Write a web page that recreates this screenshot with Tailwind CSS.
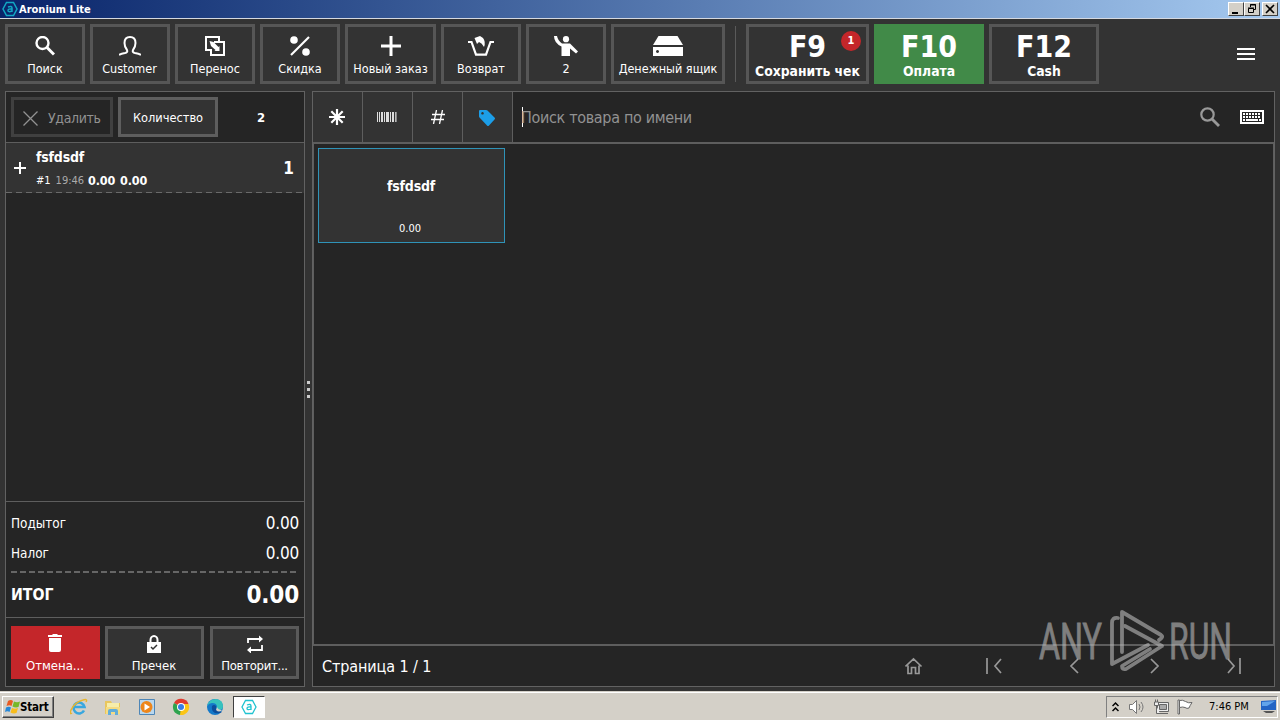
<!DOCTYPE html>
<html lang="ru">

<head>
  <meta charset="UTF-8">
  <meta name="viewport" content="width=device-width, initial-scale=1.0">
  <title>Aronium Lite</title>
  <script src="https://cdn.jsdelivr.net/npm/@tailwindcss/browser@4"></script>
</head>

<body class="relative flex h-[720px] w-[1280px] flex-col overflow-hidden bg-[#333] font-['DejaVu_Sans_Condensed','Noto_Sans',sans-serif] text-white">
  <!-- Title bar -->
  <header class="flex h-[19px] shrink-0 items-center border-b border-[#d4d8e0] bg-linear-to-r from-[#0a246a] to-[#a6caf0] pr-[2px] pl-[2px]">
    <svg class="h-4 w-4" viewBox="0 0 16 16" fill="none" stroke="#12a8c4" stroke-width="1.5">
      <path d="M4.5 1.5h7L15 8l-3.500 6.500h-7L1 8z" />
      <path d="M6 6q4-1.500 4 1v4M10 8q-4-.500-4 1.500T10 10" />
    </svg>
    <h1 class="ml-px text-[11px] leading-none font-bold">Aronium Lite</h1>
    <div class="ml-auto flex text-black">
      <span class="h-[14px] w-4 border border-t-white border-r-[#404040] border-b-[#404040] border-l-white bg-[#d4d0c8]">
        <svg class="h-3 w-[14px]" viewBox="0 0 14 12"><path d="M3 9h6v2H3z" /></svg>
      </span>
      <span class="h-[14px] w-4 border border-t-white border-r-[#404040] border-b-[#404040] border-l-white bg-[#d4d0c8]">
        <svg class="h-3 w-[14px]" viewBox="0 0 14 12" fill="none" stroke="#000"><path d="M5.500 4V1.500h5v5H8M5 2h6M3.500 5.500h5v4h-5zM3 5h6" /></svg>
      </span>
      <span class="ml-[2px] h-[14px] w-4 border border-t-white border-r-[#404040] border-b-[#404040] border-l-white bg-[#d4d0c8]">
        <svg class="h-3 w-[14px]" viewBox="0 0 14 12" fill="none" stroke="#000" stroke-width="1.600"><path d="M3 2l8 8M11 2l-8 8" /></svg>
      </span>
    </div>
  </header>

  <!-- Toolbar -->
  <nav class="flex h-[72px] shrink-0 items-start gap-[5px] pt-[5px] pl-[5px] text-[12.5px]">
    <button class="flex h-[60px] w-20 flex-col items-center border-3 border-[#565656] pt-[9px]">
      <svg class="h-5 w-5" viewBox="0 0 20 20" fill="none" stroke="#fff"><circle cx="7.500" cy="7" r="6" stroke-width="2.400" /><path d="M12 11.500l7 7" stroke-width="3" /></svg>
      <span class="mt-[5px] leading-4 whitespace-nowrap">Поиск</span>
    </button>
    <button class="flex h-[60px] w-20 flex-col items-center border-3 border-[#565656] pt-[9px] pr-px">
      <svg class="h-5 w-[22px]" viewBox="0 0 22 20" fill="none" stroke="#fff" stroke-width="2"><path d="M0 19Q2 17.500 6 17q3-.5 2-3Q5.500 11 5.500 7 5.500 1 11 1t5.500 6q0 4-2.500 7-1 2.500 2 3 4 .5 6 2" /></svg>
      <span class="mt-[5px] leading-4 whitespace-nowrap">Customer</span>
    </button>
    <button class="flex h-[60px] w-20 flex-col items-center border-3 border-[#565656] pt-[9px]">
      <svg class="h-5 w-5" viewBox="0 0 20 20" fill="none" stroke="#fff" stroke-width="2"><path d="M5 14H1V1h13v4M9 6h10v13H6v-6M13 6h6" /><path d="M4.500 5l4 1 5 5 1-1v5H9.500l1-1-4.500-4z" fill="#fff" stroke="none" /></svg>
      <span class="mt-[5px] leading-4 whitespace-nowrap">Перенос</span>
    </button>
    <button class="flex h-[60px] w-20 flex-col items-center border-3 border-[#565656] pt-[9px]">
      <svg class="h-5 w-5" viewBox="0 0 20 20" fill="#fff"><circle cx="4" cy="4" r="3.800" /><circle cx="16" cy="16" r="3.800" /><path d="M1 19L19 1" stroke="#fff" stroke-width="2.200" /></svg>
      <span class="mt-[5px] leading-4 whitespace-nowrap">Скидка</span>
    </button>
    <button class="flex h-[60px] w-[91px] flex-col items-center border-3 border-[#565656] pt-[9px]">
      <svg class="h-5 w-5" viewBox="0 0 20 20" stroke="#fff" stroke-width="3"><path d="M10 0v20M0 10h20" /></svg>
      <span class="mt-[5px] leading-4 whitespace-nowrap">Новый заказ</span>
    </button>
    <button class="flex h-[60px] w-20 flex-col items-center border-3 border-[#565656] pt-[9px]">
      <svg class="h-5 w-7" viewBox="0 0 28 20" fill="none" stroke="#fff" stroke-width="2.200"><path d="M1 6h3.500L9 18.700h10L23.500 6H27" /><path d="M7.500 2L13 0l3 2q3 4 1 9-2-4-5-5l-2 2z" fill="#fff" stroke="none" /></svg>
      <span class="mt-[5px] leading-4 whitespace-nowrap">Возврат</span>
    </button>
    <button class="flex h-[60px] w-20 flex-col items-center border-3 border-[#565656] pt-[9px]">
      <svg class="h-5 w-6" viewBox="0 0 24 20" fill="#fff"><circle cx="12" cy="3.200" r="3.100" /><path d="M0 0h3q1 5 5 7.500h8l8 8-2 2-6-5V20H7.500v-9.500Q0 7 0 0z" /></svg>
      <span class="mt-[5px] leading-4 whitespace-nowrap">2</span>
    </button>
    <button class="flex h-[60px] w-[114px] flex-col items-center border-3 border-[#565656] pt-[9px]">
      <svg class="h-5 w-[30px]" viewBox="0 0 30 20" fill="#fff"><path d="M5.500 0h19L30 9H0z" /><path fill-rule="evenodd" d="M0 11h30v9H0zM4.500 14a1.500 1.500 0 1 0 .01 0z" /></svg>
      <span class="mt-[5px] leading-4 whitespace-nowrap">Денежный ящик</span>
    </button>
    <span class="mt-[2px] mr-[5px] ml-[5px] h-[56px] w-px bg-[#5a5a5a]"></span>
    <button class="relative flex h-[60px] w-[123px] flex-col items-center border-3 border-[#565656] pt-[3px] font-bold">
      <span class="text-[30px] leading-[34px]">F9</span>
      <span class="-mt-px text-[13.8px] leading-4 whitespace-nowrap">Сохранить чек</span>
      <span class="absolute top-1 right-[5px] flex h-5 w-5 items-center justify-center rounded-full bg-[#c4262a] text-[11px]">1</span>
    </button>
    <button class="flex h-[60px] w-[110px] flex-col items-center bg-[#418a48] pt-[6px] font-bold">
      <span class="text-[30px] leading-[34px]">F10</span>
      <span class="-mt-px text-[13.8px] leading-4">Оплата</span>
    </button>
    <button class="flex h-[60px] w-[110px] flex-col items-center border-3 border-[#565656] pt-[3px] font-bold">
      <span class="text-[30px] leading-[34px]">F12</span>
      <span class="-mt-px text-[13.8px] leading-4">Cash</span>
    </button>
    <svg class="mt-6 mr-[25px] ml-auto h-3 w-[18px]" viewBox="0 0 18 12" fill="#fff"><path d="M0 0h18v2H0zM0 5h18v2H0zM0 10h18v2H0z" /></svg>
  </nav>

  <!-- Workspace -->
  <main class="flex h-[600px] shrink-0 pl-[5px]">
    <!-- Order -->
    <section class="flex h-[596px] w-[300px] flex-col border border-[#626262] bg-[#252525]">
      <div class="flex h-[50px] shrink-0 items-center gap-[5px] px-[5px]">
        <button class="flex h-10 w-[102px] items-center border-3 border-[#404040] pt-[2px] pl-[9px] text-[14px] tracking-[-0.35px] text-[#929292]">
          <svg class="mr-[10px] h-[15px] w-[15px]" viewBox="0 0 15 15" stroke="#929292" stroke-width="1.300"><path d="M.5.5l14 14M14.500.5l-14 14" /></svg>
          Удалить
        </button>
        <button class="h-10 w-[100px] border-3 border-[#5e5e5e] bg-[#333] pt-px text-[12.700px] whitespace-nowrap">Количество</button>
        <span class="ml-[33px] w-[10px] pt-px text-center text-[13px] font-bold">2</span>
      </div>
      <div class="flex h-[51px] shrink-0 items-center border-t border-[#5e5e5e] bg-[#333]">
        <svg class="ml-2 h-3 w-3" viewBox="0 0 12 12" stroke="#fff" stroke-width="2"><path d="M6 0v12M0 6h12" /></svg>
        <div class="ml-[10px] flex flex-col">
          <span class="text-[14px] leading-[18px] font-bold tracking-[-0.2px]">fsfdsdf</span>
          <div class="mt-[7px] flex items-center gap-[5px] text-[11px] leading-4">
            <span>#1</span><span class="text-[#aaa]">19:46</span><span class="-ml-px text-[12.500px] font-bold tracking-[-0.2px]">0.00</span><span class="text-[12.500px] font-bold tracking-[-0.2px]">0.00</span>
          </div>
        </div>
        <span class="mr-[10px] ml-auto pt-px text-[17px] font-bold">1</span>
      </div>
      <svg class="-mt-px block h-px w-[298px] shrink-0" viewBox="0 0 298 1"><path d="M0 .5h298" stroke="#6a6a6a" stroke-dasharray="6 4" /></svg>
      <div class="flex-1"></div>
      <div class="h-[116px] shrink-0 border-t border-[#5e5e5e] px-[5px] pt-[7px]">
        <div class="flex h-[30px] items-center justify-between"><span class="text-[13.4px]">Подытог</span><span class="text-[17px] tracking-[-0.2px]">0.00</span></div>
        <div class="flex h-[30px] items-center justify-between"><span class="text-[13.4px]">Налог</span><span class="text-[17px] tracking-[-0.2px]">0.00</span></div>
        <svg class="mt-[2px] block h-[2px] w-[287px]" viewBox="0 0 287 2"><path d="M0 1h285" stroke="#666" stroke-width="2" stroke-dasharray="6 3" /></svg>
        <div class="flex h-[43px] items-center justify-between font-bold"><span class="text-[15.700px]">ИТОГ</span><span class="text-[24px] tracking-[-0.2px]">0.00</span></div>
      </div>
      <div class="flex h-[69px] shrink-0 border-t border-[#5e5e5e] pt-2 pl-[5px] text-[13px]">
        <button class="flex h-[53px] w-[89px] flex-col items-center bg-[#c4262a] pt-2 pr-px">
          <svg class="h-[18px] w-[14px]" viewBox="0 0 14 18" fill="#fff"><path d="M0 1h4l1-1h4l1 1h4v2H0zM1 4h12v12q0 2-2 2H3q-2 0-2-2z" /></svg>
          <span class="mt-[6px] leading-4">Отмена...</span>
        </button>
        <button class="ml-[5px] flex h-[53px] w-[99px] flex-col items-center border-3 border-[#5a5a5a] bg-[#333] pt-[6px] pr-px">
          <svg class="h-[18px] w-[14px]" viewBox="0 0 14 18"><path d="M3.500 8V5a3.500 4 0 0 1 7 0v3" fill="none" stroke="#fff" stroke-width="2" /><path d="M0 7h14v11H0z" fill="#fff" /><path d="M4 12l2 2 4-4" fill="none" stroke="#333" stroke-width="1.500" /></svg>
          <span class="mt-[5px] leading-4">Пречек</span>
        </button>
        <button class="ml-[6px] flex h-[53px] w-[89px] flex-col items-center border-3 border-[#5a5a5a] bg-[#333] pt-[6px]">
          <svg class="h-[18px] w-4" viewBox="0 0 16 18" fill="none" stroke="#fff" stroke-width="1.800"><path d="M1 8V4h12M15 10v5H3" /><path d="M12 .5L16 4l-4 3.500zM4 11.500L0 15l4 3.500z" fill="#fff" stroke="none" /></svg>
          <span class="mt-[5px] leading-4 tracking-[-0.3px] whitespace-nowrap">Повторит...</span>
        </button>
      </div>
    </section>

    <!-- Splitter handle -->
    <div class="flex w-[7px] flex-col items-center gap-1 pt-[290px]">
      <span class="h-[3px] w-[3px] bg-[#ccc]"></span>
      <span class="h-[3px] w-[3px] bg-[#ccc]"></span>
      <span class="h-[3px] w-[3px] bg-[#ccc]"></span>
    </div>

    <!-- Products -->
    <section class="flex h-[596px] w-[963px] flex-col border border-[#626262] bg-[#252525]">
      <div class="flex h-[50px] shrink-0 items-center">
        <span class="flex h-full w-[50px] items-center justify-center border-r border-[#5e5e5e] bg-[#333] pr-px">
          <svg class="h-4 w-4" viewBox="0 0 16 16" stroke="#fff" stroke-width="2.200"><path d="M8 0v16M0 8h16M2.300 2.300l11.400 11.400M13.700 2.300L2.300 13.700" /></svg>
        </span>
        <span class="flex h-full w-[50px] items-center justify-center border-r border-[#5e5e5e] bg-[#333] pr-[2px]">
          <svg class="h-[10px] w-5" viewBox="0 0 20 10" fill="#ddd"><path d="M0 0h1v10H0zM2 0h1v10H2zM4 0h2v10H4zM7 0h1v10H7zM9 0h3v10H9zM13 0h1v10h-1zM15 0h2v10h-2zM18 0h.8v10H18zM19.500 0h.5v10h-.5z" /></svg>
        </span>
        <span class="flex h-full w-[50px] items-center justify-center border-r border-[#5e5e5e] bg-[#333]">
          <svg class="h-[14px] w-[14px]" viewBox="0 0 14 14" stroke="#fff" stroke-width="1.300"><path d="M5.500 0L2.500 14M11.500 0l-3 14M1 4.500h13M0 9.500h13" /></svg>
        </span>
        <span class="flex h-full w-[50px] items-center justify-center border-r border-[#5e5e5e] bg-[#333] pt-px pr-[2px]">
          <svg class="h-4 w-4" viewBox="0 0 16 16" fill="#1c9ee8"><path fill-rule="evenodd" d="M1 0h6q1 0 1.500.5l7 7q1 1 0 2l-5.500 6q-1 1-2 0l-7.500-8Q0 7 0 6V1q0-1 1-1zM3.500 2a1.300 1.300 0 1 0 .01 0z" /></svg>
        </span>
        <span class="ml-[9px] h-5 w-px bg-white"></span>
        <span class="-ml-[2px] pt-[2px] text-[16px] tracking-[-0.33px] text-[#929292]">Поиск товара по имени</span>
        <svg class="mr-5 ml-auto h-5 w-5" viewBox="0 0 20 20" fill="none" stroke="#999"><circle cx="7.500" cy="7.500" r="6.200" stroke-width="2.200" /><path d="M12 12l7 7" stroke-width="2.800" /></svg>
        <svg class="mr-[10px] h-[14px] w-6" viewBox="0 0 24 14"><path d="M1 1h22v12H1z" fill="none" stroke="#fff" stroke-width="2" /><path d="M3 4h18M3 7h18" fill="none" stroke="#fff" stroke-width="2" stroke-dasharray="2 1" /><path d="M3 10h2M6 10h12M19 10h2" stroke="#fff" stroke-width="2" /></svg>
      </div>
      <div class="h-[504px] shrink-0 border-2 border-r border-l-1 border-[#5e5e5e] pt-1 pl-1">
        <div class="flex h-[95px] w-[187px] flex-col items-center border border-[#2f93b8] bg-[#333] pr-px">
          <span class="mt-7 text-[14px] leading-[18px] font-bold tracking-[-0.2px]">fsfdsdf</span>
          <span class="mt-[26px] mr-[2px] text-[11px] leading-4">0.00</span>
        </div>
      </div>
      <div class="flex flex-1 items-center pr-[33px] pl-[9px]">
        <span class="pt-px text-[16px] tracking-[-0.1px]">Страница 1 / 1</span>
        <svg class="ml-auto h-[18px] w-[336px]" viewBox="0 0 336 18" fill="none" stroke="#999" stroke-width="1.700">
          <path d="M.5 9.500L8.500 2l8 7.500M3 8.500v8h3.500v-6h4v6H14v-8" />
          <path d="M82 1v16M96 2l-6 7 6 7M173 2l-7 7 7 7M246 2l7 7-7 7M323 2l6 7-6 7M335 1v16" />
        </svg>
      </div>
    </section>
  </main>

  <!-- Taskbar -->
  <footer class="flex flex-1 items-center border-t border-[#d4d0c8] bg-[#d4d0c8] text-black shadow-[inset_0_1px_0_#fff]">
    <button class="mt-px ml-[2px] flex h-[22px] w-[52px] items-center border border-t-white border-r-[#404040] border-b-[#404040] border-l-white pl-[2px] shadow-[inset_-1px_-1px_0_#808080]">
      <svg class="h-4 w-4" viewBox="0 0 16 16"><path d="M3 2q3-2 5 0L6.500 7q-2-1.500-5 0z" fill="#e95b22" /><path d="M9 2.500q3 1.500 6 0L13.500 8q-3 1-6-.5z" fill="#76b82a" /><path d="M1 8.500q3-1.500 5 0L4.500 13q-2-1.500-4.500 0z" fill="#2688d8" /><path d="M7 9q3 1.500 6 0l-1.500 5q-3 1-6-.5z" fill="#f8bd1c" /></svg>
      <span class="-ml-px pt-[2px] text-[11.5px] font-bold tracking-[-0.2px]">Start</span>
    </button>
    <div class="mt-px ml-4 flex items-center gap-4">
      <svg class="h-[18px] w-[18px]" viewBox="0 0 18 18" fill="none"><path d="M14 12.500A5.500 5.500 0 1 1 14.500 9H5" stroke="#38a7df" stroke-width="2.600" /><path d="M2 15Q-1 17 1 12 5 4 13 2q5-1.500 3 2" stroke="#e8b52d" stroke-width="1.500" /></svg>
      <svg class="h-[18px] w-[18px]" viewBox="0 0 18 18"><path d="M1 3h6l1 2h8v11H1z" fill="#e9c65d" /><path d="M3 5h12v5H3z" fill="#f7edaa" /><path d="M2 9h14v7H2z" fill="#f5dc83" /><path d="M4 17v-4q0-2 2-2h6q2 0 2 2v4h-3v-3H7v3z" fill="#62add9" /></svg>
      <svg class="h-[18px] w-[18px]" viewBox="0 0 18 18"><path d="M1.500 1.500h15v15h-15z" fill="#b9d7ee" stroke="#4e86b7" /><circle cx="8.500" cy="9" r="6" fill="#ed861b" /><path d="M6.500 5.500l5.500 3.500-5.500 3.500z" fill="#fff" /></svg>
      <svg class="h-[18px] w-[18px]" viewBox="0 0 18 18"><path d="M9 9L2 5a8 8 0 0 1 14.500 1z" fill="#df3b2f" /><path d="M9 9L2 5a8 8 0 0 0 6 12l4-7z" fill="#2ea34e" /><path d="M9 9l-1 8a8 8 0 0 0 8.500-11H9z" fill="#fbc516" /><circle cx="9" cy="9" r="4" fill="#fff" /><circle cx="9" cy="9" r="3" fill="#377de5" /></svg>
      <svg class="h-[18px] w-[18px]" viewBox="0 0 18 18"><circle cx="9" cy="9" r="8" fill="#1479c9" /><path d="M1 8Q3 1 10 1q7 1 7 7 0 4-4 4-3 0-2-3 0-4-5-4-3 0-5 3z" fill="#37c2bd" /><path d="M6 8q-1 5 3 7 4 1 7-1-3-1-5-2-1-2-1-4-2-2-4 0z" fill="#0d4e9b" /><path d="M11 9q1 3 5 3-3 3-6 0z" fill="#d4d0c8" /></svg>
    </div>
    <span class="mt-px ml-[9px] flex h-[22px] w-[32px] items-center justify-center border border-t-[#404040] border-r-white border-b-white border-l-[#404040] bg-white">
      <svg class="h-4 w-4" viewBox="0 0 16 16" fill="none" stroke="#20c3d0" stroke-width="1.300"><path d="M4.500 1.500h7L15 8l-3.500 6.500h-7L1 8z" /><path d="M6 6q4-1.500 4 1v4M10 8q-4-.5-4 1.500T10 10" /></svg>
    </span>
    <div class="mt-px mr-[2px] ml-auto flex h-[22px] w-[172px] items-center border border-t-[#808080] border-r-white border-b-white border-l-[#808080] pl-[5px]">
      <svg class="h-3 w-[7px]" viewBox="0 0 7 12" fill="none" stroke="#000" stroke-width="1.500"><path d="M.5 5l3-3 3 3M.5 10l3-3 3 3" /></svg>
      <svg class="ml-[10px] h-4 w-4" viewBox="0 0 16 16" fill="#fff" stroke="#777"><path d="M.5 5.500h3l4-4v13l-4-4h-3z" /><path d="M10 5q2 3 0 6M12 3q4 5 0 10" fill="none" /></svg>
      <svg class="ml-2 h-4 w-4" viewBox="0 0 16 16" fill="#eee" stroke="#666"><path d="M4.500 3.500h11v9h-11z" /><path d="M6.500 5.500h7v5h-7z" fill="#aaa" /><path d="M7 14.500h8M1.500 3v3.500h4V3zM2.500 3V.5M4.500 3V.5M3.500 7v7.500H7" /></svg>
      <svg class="ml-2 h-4 w-4" viewBox="0 0 16 16" fill="#fff" stroke="#666"><path d="M1 1h1.500v14H1z" /><path d="M2.500 1.500q3-1 6 1 3 2 6.500 1-2 3-3 5.500-2 1-4-.5-2-1-5.500 0z" /></svg>
      <span class="ml-4 pt-[2px] text-[11px] whitespace-nowrap">7:46 PM</span>
      <svg class="mr-px ml-auto h-[14px] w-4" viewBox="0 0 16 14"><path d="M1 1l15-1v10H1z" fill="#2464c4" /><path d="M2 2l13-1-8 5H2z" fill="#62a4eb" /><path d="M3 11h12l-3 2H6z" fill="#555" /></svg>
    </div>
  </footer>

  <!-- Watermark -->
  <svg class="absolute top-[600px] left-[1036px] h-[80px] w-[210px] opacity-60" viewBox="0 -8 210 80" fill="#bbb" font-family="Roboto, sans-serif" font-size="50">
    <text x="3" y="51" textLength="63" lengthAdjust="spacingAndGlyphs" stroke="#bbb" stroke-width=".9">ANY</text>
    <text x="133" y="51" textLength="63" lengthAdjust="spacingAndGlyphs" stroke="#bbb" stroke-width=".9">RUN</text>
    <g fill="none" stroke="#bbb" stroke-width="3.800" stroke-linecap="round" stroke-linejoin="round">
      <path d="M82 10q-6-1-6 5v41l36-19" />
      <path d="M86 44V4l39 23q3 2-2 5" />
      <path d="M89 18l37 20-36 23q-4 1-4-3l28-17" />
    </g>
  </svg>
</body>

</html>
